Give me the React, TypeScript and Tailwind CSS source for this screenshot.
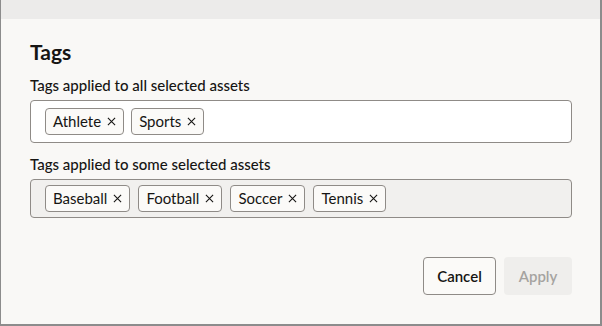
import React from 'react';

const allTags = ['Athlete', 'Sports'];
const someTags = ['Baseball', 'Football', 'Soccer', 'Tennis'];

function Chip({ label }: { label: string }) {
  return (
    <span className="inline-flex items-center h-[27px] px-[7px] gap-[6px] rounded-[4px] border border-[#8f8b87] bg-[#fbfaf8] text-[15px] text-[#161513]">
      {label}
      <svg className="w-[9px] h-[9px]" viewBox="0 0 10 10" fill="none" stroke="currentColor" strokeWidth={1.2}>
        <path d="M1 1l8 8M9 1l-8 8" />
      </svg>
    </span>
  );
}

export default function App() {
  return (
    <div
      className="w-[602px] h-[326px] flex flex-col bg-[#e9e8e6] border-l border-r-2 border-b-2 border-[#8c8c8c] overflow-hidden"
      style={{ fontFamily: 'Lato, "Noto Sans", sans-serif' }}
    >
      <div className="h-[19px] bg-[#ecebea]" />
      <div className="flex-1 bg-[#f9f8f6] pl-[29px] pr-[28px] pt-[20px] flex flex-col">
        <h2 className="text-[21px] font-bold text-[#161513] leading-[26px]">Tags</h2>

        <label className="mt-[10px] text-[15px] font-medium text-[#161513] leading-[20px]">
          Tags applied to all selected assets
        </label>
        <div className="mt-[5px] h-[43px] w-[542px] rounded-[4px] border border-[#8f8b87] bg-white flex items-center gap-[7px] px-[14px]">
          {allTags.map((t) => (
            <Chip key={t} label={t} />
          ))}
        </div>

        <label className="mt-[11px] text-[15px] font-medium text-[#161513] leading-[20px]">
          Tags applied to some selected assets
        </label>
        <div className="mt-[5px] h-[39px] w-[542px] rounded-[4px] border border-[#8f8b87] bg-[#f1f0ee] flex items-center gap-[8px] px-[14px]">
          {someTags.map((t) => (
            <Chip key={t} label={t} />
          ))}
        </div>

        <div className="mt-auto mb-[29px] flex justify-end gap-[8px]">
          <button className="h-[38px] w-[73px] rounded-[4px] border border-[#8f8b87] bg-[#fbfaf8] text-[15px] font-semibold text-[#161513]">
            Cancel
          </button>
          <button className="h-[38px] w-[68px] rounded-[4px] bg-[#efeeec] text-[15px] font-semibold text-[#a5a3a0]">
            Apply
          </button>
        </div>
      </div>
    </div>
  );
}
